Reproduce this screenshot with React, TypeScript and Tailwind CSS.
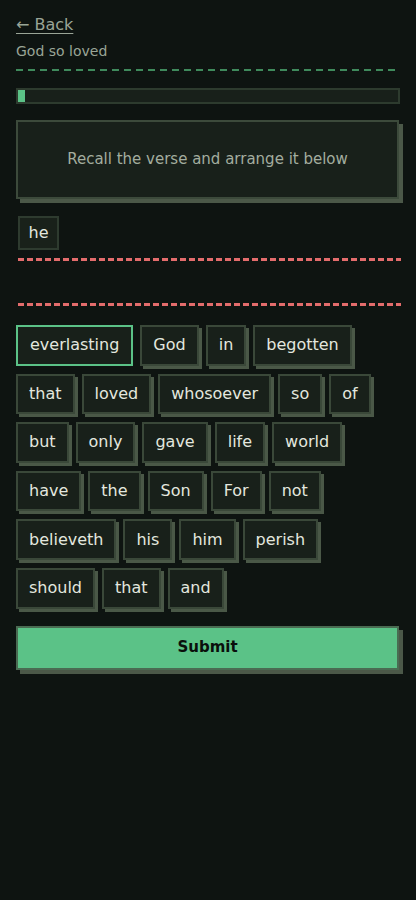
import React from "react";

const rows: string[][] = [
  ["everlasting", "God", "in", "begotten"],
  ["that", "loved", "whosoever", "so", "of"],
  ["but", "only", "gave", "life", "world"],
  ["have", "the", "Son", "For", "not"],
  ["believeth", "his", "him", "perish"],
  ["should", "that", "and"],
];

export default function App() {
  const words = rows.flat();
  return (
    <div
      className="min-h-[900px] w-full bg-[#0e1411] px-4 pt-[14px]"
      style={{ fontFamily: '"DejaVu Sans", "Liberation Sans", sans-serif' }}
    >
      <a className="block w-fit text-[16px] leading-[22px] text-[#9aa597] underline underline-offset-[3px]">
        ← Back
      </a>
      <div className="mt-[6px] text-[14px] leading-[18px] text-[#9aa597]">God so loved</div>
      <div className="mt-[9px] h-[2px] w-full bg-[repeating-linear-gradient(90deg,#3f8a5c_0_7px,transparent_7px_12px)]" />

      <div className="mt-[17px] h-[16px] w-[384px] border-2 border-[#2d3b2e] bg-[#18201a]">
        <div className="h-full w-[7px] bg-[#5bc287]" />
      </div>

      <div className="mt-[16px] flex h-[79px] w-[383px] items-center justify-center border-2 border-[#3c4a3b] bg-[#18201a] text-[15px] text-[#a3ad9f] shadow-[4px_4px_0_#4b5848]">
        Recall the verse and arrange it below
      </div>

      <div className="ml-[2px] mt-[17px] flex h-[34px] w-[41px] items-center justify-center border-2 border-[#2e3b2f] bg-[#19211a] text-[16px] text-[#e3e7df]">
        he
      </div>

      <div className="ml-[2px] mt-[8px] h-[3px] w-[383px] bg-[repeating-linear-gradient(90deg,#e36c6c_0_6px,transparent_6px_9px)]" />
      <div className="h-[42px]" />
      <div className="ml-[2px] h-[3px] w-[383px] bg-[repeating-linear-gradient(90deg,#e36c6c_0_6px,transparent_6px_9px)]" />

      <div className="mt-[19px] flex w-[384px] flex-wrap gap-x-[7px] gap-y-2">
        {words.map((w, i) =>
          i === 0 ? (
            <div
              key={i}
              className="flex h-[40.6px] items-center border-2 border-[#5bc287] bg-[#18201a] px-[12px] text-[16px] text-[#e3e7df]"
            >
              {w}
            </div>
          ) : (
            <div
              key={i}
              className="flex h-[40.6px] items-center border-2 border-[#3a4839] bg-[#18201a] px-[11px] text-[16px] text-[#e3e7df] shadow-[3px_3px_0_#4a5847]"
            >
              {w}
            </div>
          )
        )}
      </div>

      <button className="mt-[17px] flex h-[44px] w-[383px] items-center justify-center border-2 border-[#4a6b52] bg-[#5bc287] text-[15px] font-bold text-[#0a0f0c] shadow-[4px_4px_0_#4b5848]">
        Submit
      </button>
    </div>
  );
}
